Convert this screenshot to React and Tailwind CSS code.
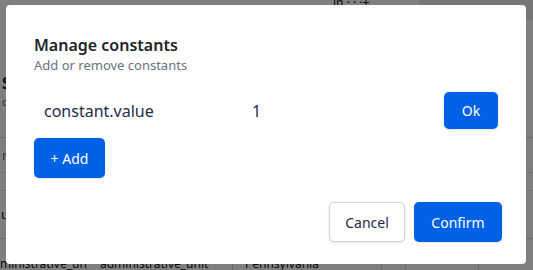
export default function App() {
  const font = { fontFamily: '"Noto Sans", "Open Sans", sans-serif' };
  return (
    <div className="relative w-[533px] h-[270px] overflow-hidden bg-white" style={font}>
      {/* page behind the dialog */}
      <div className="flex flex-col h-full text-[13px] text-[#111827]">
        <div className="flex h-[20px]">
          <div className="w-[333px]" />
          <div className="w-[86px] text-[12px] leading-[6px] text-[#111] overflow-hidden">ih · · ·+</div>
          <div className="flex-1 bg-[#ececec]" />
        </div>
        <div className="h-[52px]" />
        <div className="h-[22px] pl-[2px] text-[16px] font-bold leading-[22px]">Se</div>
        <div className="h-[43px] pl-[2px] text-[11px] text-[#555]">o</div>
        <div className="h-[35px] border-t border-[#d9d9d9] pl-[2px] pt-[8px] text-[#666]">r</div>
        <div className="h-[18px] border-t border-[#e5e5e5]" />
        <div className="h-[48px] border-t border-[#e5e5e5] pl-[1px] pt-[14px]">u</div>
        <div className="flex h-[32px] border-t border-[#d9d9d9] text-[12px] leading-[50px]">
          <div className="w-[87px] border-r border-[#d9d9d9] overflow-hidden whitespace-nowrap">ministrative_uni</div>
          <div className="w-[146px] border-r border-[#d9d9d9] pl-[13px] overflow-hidden whitespace-nowrap">administrative_unit</div>
          <div className="w-[149px] border-r border-[#d9d9d9] pl-[12px] overflow-hidden whitespace-nowrap">Pennsylvania</div>
          <div className="w-[24px] border-r border-[#d9d9d9]" />
          <div className="w-[73px] border-r border-[#d9d9d9]" />
          <div className="flex-1" />
        </div>
      </div>

      {/* overlay + dialog */}
      <div className="absolute inset-0 bg-black/50 flex items-start justify-start pl-[6px] pt-[5px]">
        <div className="w-[520px] h-[259px] bg-white rounded-[4px] flex flex-col pl-[28px] pr-[24px] pt-[29px]">
          <div className="text-[16px] leading-[22px] font-semibold text-[#1f2328]">Manage constants</div>
          <div className="text-[13px] leading-[18px] text-[#6b7280]">Add or remove constants</div>

          <div className="mt-[18px] mr-[4px] flex items-center h-[37px]">
            <div className="w-[218px] pl-[10px] text-[16px] leading-[20px] text-[#1e2a4b]">constant.value</div>
            <div className="text-[16px] leading-[20px] text-[#1e2a4b]">1</div>
            <button className="ml-auto h-[37px] w-[54px] rounded-[5px] bg-[#0061e6] text-white text-[14px] shadow-sm">
              Ok
            </button>
          </div>

          <div className="mt-[9px]">
            <button className="h-[40px] w-[71px] rounded-[5px] bg-[#0061e6] text-white text-[14px] shadow-sm">
              + Add
            </button>
          </div>

          <div className="mt-[24px] flex justify-end gap-[9px]">
            <button className="h-[40px] w-[76px] rounded-[5px] border border-[#d1d5db] bg-white text-[#1e2a4b] text-[14px] shadow-sm">
              Cancel
            </button>
            <button className="h-[40px] w-[88px] rounded-[5px] bg-[#0061e6] text-white text-[14px] shadow-sm">
              Confirm
            </button>
          </div>
        </div>
      </div>
    </div>
  );
}
